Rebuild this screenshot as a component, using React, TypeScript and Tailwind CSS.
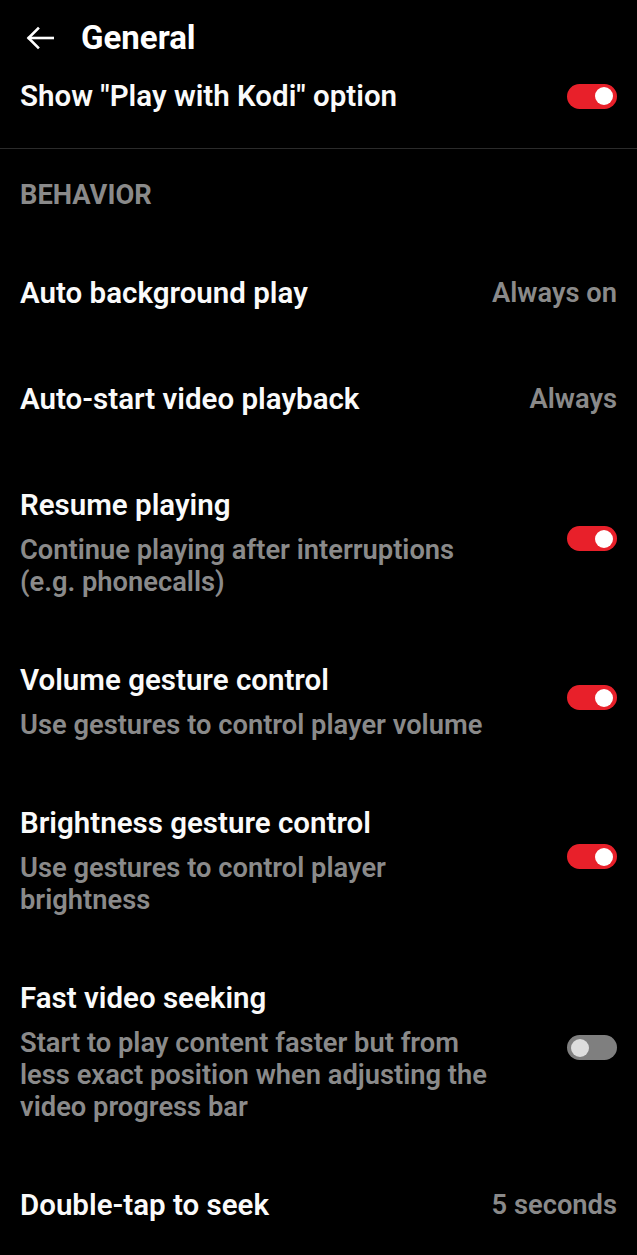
import React from "react";

type Item = {
  title: string;
  summary?: string;
  value?: string;
  toggle?: boolean;
};

const items: Item[] = [
  { title: "Auto background play", value: "Always on" },
  { title: "Auto-start video playback", value: "Always" },
  { title: "Resume playing", summary: "Continue playing after interruptions (e.g. phonecalls)", toggle: true },
  { title: "Volume gesture control", summary: "Use gestures to control player volume", toggle: true },
  { title: "Brightness gesture control", summary: "Use gestures to control player brightness", toggle: true },
  {
    title: "Fast video seeking",
    summary: "Start to play content faster but from less exact position when adjusting the video progress bar",
    toggle: false,
  },
  { title: "Double-tap to seek", value: "5 seconds" },
];

const Switch = ({ on, lift }: { on: boolean; lift?: boolean }) => (
  <div
    className={
      (on
        ? "flex h-[25px] w-[50px] shrink-0 items-center justify-end rounded-full bg-[#e8202a] px-[4px]"
        : "flex h-[25px] w-[50px] shrink-0 items-center justify-start rounded-full bg-[#7f7f7f] px-[4px]") +
      (lift ? " mb-[8px]" : "")
    }
  >
    <div className={on ? "h-[18px] w-[18px] rounded-full bg-white" : "h-[18px] w-[18px] rounded-full bg-[#dedede]"} />
  </div>
);

const Row = ({ item }: { item: Item }) => (
  <div
    className={
      item.summary
        ? "flex items-center justify-between gap-4 pl-[20px] pr-[20px] pt-[35px] pb-[29px]"
        : "flex items-center justify-between gap-4 pl-[20px] pr-[20px] py-[35px]"
    }
  >
    <div className="flex flex-col">
      <div className="text-[29.5px] leading-[36px] font-semibold text-[#fafafa]">{item.title}</div>
      {item.summary && (
        <div className="mt-[11px] max-w-[476px] text-[27.3px] leading-[32px] font-semibold text-[#8a8a8a]">
          {item.summary}
        </div>
      )}
    </div>
    {item.value && <div className="text-[27.3px] leading-[36px] font-semibold text-[#8a8a8a]">{item.value}</div>}
    {item.toggle !== undefined && <Switch on={item.toggle} lift={!!item.summary} />}
  </div>
);

export default function App() {
  return (
    <div className="min-h-[1255px] w-[637px] overflow-hidden bg-black font-['Roboto',sans-serif]">
      {/* toolbar */}
      <div className="flex h-[76px] items-center pl-[26px]">
        <svg width="28" height="24" viewBox="0 0 28 24" fill="none" stroke="#ffffff" strokeWidth="2.6" strokeLinecap="square">
          <path d="M27 12H3" />
          <path d="M12 2.5L2.5 12L12 21.5" />
        </svg>
        <div className="ml-[27px] text-[33px] leading-[40px] font-bold text-white">General</div>
      </div>

      <div className="flex items-center justify-between px-[20px] pt-[2px] pb-[34px]">
        <div className="text-[29.5px] leading-[36px] font-semibold text-[#fafafa]">Show "Play with Kodi" option</div>
        <Switch on />
      </div>
      <div className="h-px bg-[#2b2b2b]" />

      <div className="px-[20px] pt-[30px] pb-[29px] text-[27.3px] leading-[32px] font-bold text-[#8a8a8a]">BEHAVIOR</div>

      {items.map((item) => (
        <Row key={item.title} item={item} />
      ))}
    </div>
  );
}
